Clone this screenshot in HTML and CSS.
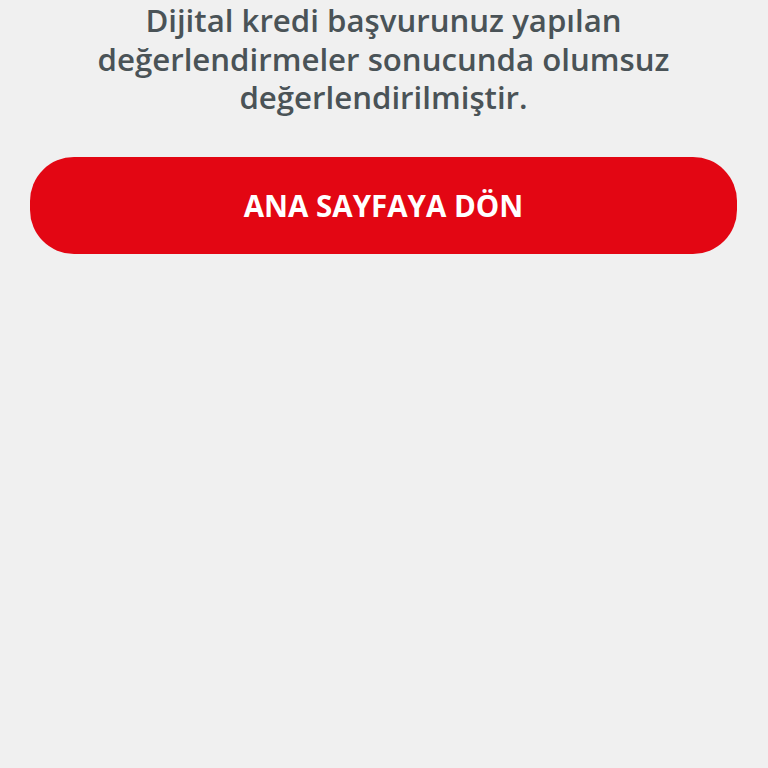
FILE: index.html
```html
<!DOCTYPE html>
<html lang="tr">
<head>
<meta charset="utf-8">
<link rel="stylesheet" href="styles.css">
</head>
<body>
<main class="page">
  <p class="message">Dijital kredi başvurunuz yapılan<br>değerlendirmeler sonucunda olumsuz<br>değerlendirilmiştir.</p>
  <button class="primary">ANA SAYFAYA DÖN</button>
</main>
</body>
</html>
```

FILE: styles.css
```css
html, body {
  margin: 0;
  padding: 0;
  background: #f0f0f0;
}
.page {
  display: flex;
  flex-direction: column;
  align-items: stretch;
  padding: 0 31px 0 30px;
  height: 768px;
  box-sizing: border-box;
}
.message {
  margin: 0;
  padding-top: 1px;
  text-align: center;
  font-family: "Open Sans", sans-serif;
  font-weight: 600;
  font-size: 31.2px;
  line-height: 38.5px;
  color: #4a5357;
}
.primary {
  margin-top: 40px;
  height: 97px;
  border: none;
  border-radius: 44px;
  background: #e30613;
  color: #ffffff;
  font-family: "Open Sans", sans-serif;
  font-weight: 700;
  font-size: 29.5px;
  letter-spacing: 0;
}
```
